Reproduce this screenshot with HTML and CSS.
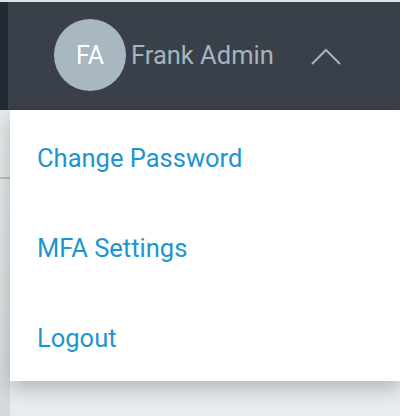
FILE: index.html
```html
<!DOCTYPE html>
<html>
<head>
  <title>Admin</title>
  <link rel="stylesheet" href="styles.css">
</head>
<body>
  <div class="topbar">
    <div class="nav-edge"></div>
    <div class="user-box">
      <div class="avatar">FA</div>
      <span class="user-name">Frank Admin</span>
      <svg class="chevron" width="32" height="18" viewBox="0 0 32 18">
        <polyline points="2,16 16,2 30,16" fill="none" stroke="#a6b4bd" stroke-width="2"/>
      </svg>
    </div>
    <div class="dropdown">
      <a href="#" class="dropdown-item">Change Password</a>
      <a href="#" class="dropdown-item">MFA Settings</a>
      <a href="#" class="dropdown-item">Logout</a>
    </div>
  </div>

  <div class="page">
    <div class="side">
      <div class="side-row"></div>
    </div>
    <div class="content"></div>
  </div>
</body>
</html>
```
FILE: styles.css
```css
body {
  margin: 0;
  background-color: #e8ecee;
  font-family: Roboto, "Liberation Sans", sans-serif;
  border-top: 2px solid #dfe2e5;
}
.topbar {
  position: relative;
  display: flex;
  height: 108px;
  background-color: #3a404a;
}
.nav-edge {
  width: 8px;
  background-color: #232a33;
}
.user-box {
  display: flex;
  align-items: center;
  padding-left: 46px;
  margin-top: -2px;
}
.avatar {
  width: 72px;
  height: 72px;
  border-radius: 50%;
  background-color: #a9b7c0;
  color: #fff;
  font-size: 25px;
  display: flex;
  align-items: center;
  justify-content: center;
}
.user-name {
  color: #a6b4bd;
  font-size: 25.5px;
  margin-left: 5px;
}
.chevron {
  margin-left: 36px;
  margin-top: 4px;
}
.dropdown {
  position: absolute;
  top: 108px;
  left: 10px;
  right: 0;
  background: #fff;
  box-shadow: 0 8px 18px rgba(0, 0, 0, 0.22);
  display: flex;
  flex-direction: column;
  padding: 3px 0 0;
  z-index: 2;
}
.dropdown-item {
  display: block;
  color: #1d95cf;
  text-decoration: none;
  font-size: 25.5px;
  padding: 30px 27px 30px;
  height: 30px;
  line-height: 30px;
}
.dropdown-item:last-child {
  padding-bottom: 28px;
}
.page {
  display: flex;
  height: 306px;
}
.side {
  width: 10px;
  background: linear-gradient(#e6eaec, #d3d8db);
}
.side-row {
  height: 67px;
  border-bottom: 2px solid #b9bdc0;
}
.content {
  flex: 1;
}
```
